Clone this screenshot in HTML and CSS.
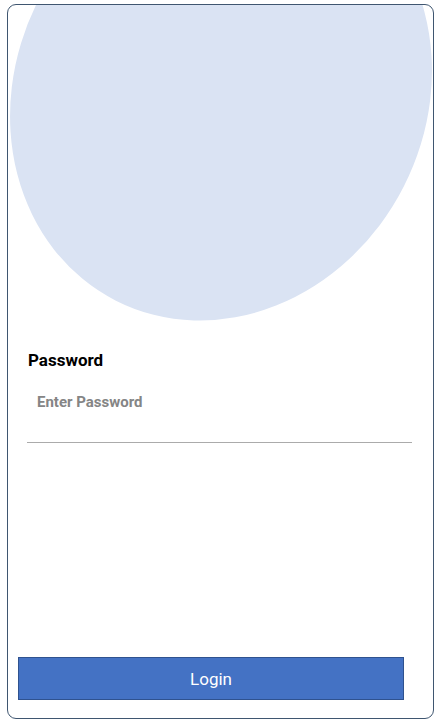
FILE: index.html
```html
<!DOCTYPE html>
<html lang="en">
<head>
<meta charset="utf-8">
<title>Login</title>
<link rel="stylesheet" href="styles.css">
</head>
<body>
<div class="card">
  <svg class="hero" width="425" height="316" viewBox="8 5 425 316" aria-hidden="true">
    <ellipse cx="221" cy="93.5" rx="205.1" ry="232.3" transform="rotate(26.9 221 93.5)" fill="#dae3f3"/>
  </svg>
  <form class="form" onsubmit="return false">
    <label class="label" for="pw">Password</label>
    <input class="input" id="pw" type="password" placeholder="Enter Password">
  </form>
  <button class="login" type="button">Login</button>
</div>
</body>
</html>
```
FILE: styles.css
```css
html, body {
  margin: 0;
  padding: 0;
  background: #ffffff;
}
body {
  font-family: Roboto, "Liberation Sans", sans-serif;
}
.card {
  box-sizing: border-box;
  margin: 4px 0 0 7px;
  width: 427px;
  height: 715px;
  border: 1px solid #3f5670;
  border-radius: 9px;
  overflow: hidden;
  display: flex;
  flex-direction: column;
}
.hero {
  display: block;
  flex: none;
}
.form {
  display: flex;
  flex-direction: column;
  padding: 29px 21px 0 19px;
  margin: 0;
}
.label {
  font-weight: 700;
  font-size: 17px;
  line-height: 20px;
  color: #000000;
  padding-left: 1px;
}
.input {
  margin: 24px 0 0 0;
  padding: 0 10px 31px 10px;
  height: 17px;
  box-sizing: content-box;
  border: none;
  border-bottom: 1px solid #ababab;
  font-family: Roboto, "Liberation Sans", sans-serif;
  font-weight: 700;
  font-size: 15px;
  line-height: 17px;
  color: #333;
  outline: none;
  background: transparent;
}
.input::placeholder {
  color: #858585;
  opacity: 1;
}
.login {
  margin: auto 0 18px 10px;
  width: 386px;
  height: 43px;
  box-sizing: border-box;
  background: #4472c4;
  border: 1px solid #2f528f;
  border-radius: 0;
  color: #ffffff;
  font-family: Roboto, "Liberation Sans", sans-serif;
  font-size: 17px;
  font-weight: 400;
  padding: 0;
  cursor: pointer;
}
```
